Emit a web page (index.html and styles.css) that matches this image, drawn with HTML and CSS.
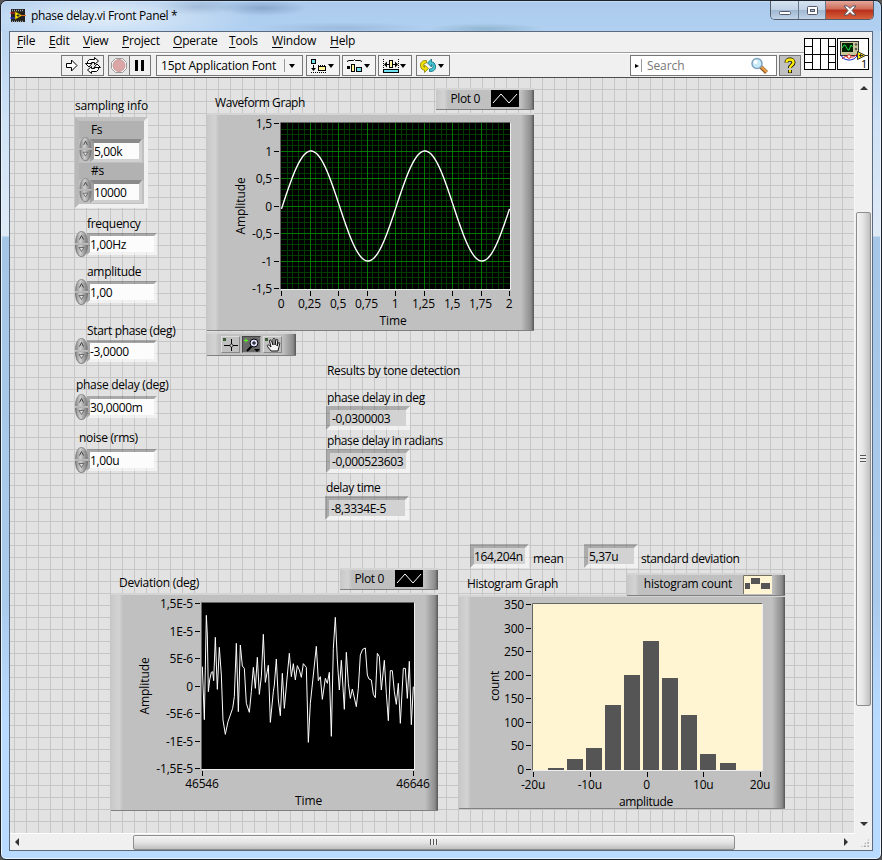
FILE: index.html
```html
<!DOCTYPE html>
<html lang="en">
<head>
<meta charset="utf-8">
<title>phase delay.vi Front Panel *</title>
<link rel="stylesheet" href="styles.css">
</head>
<body>
<div class="window">
  <header class="titlebar">
    <svg class="app-icon" width="16" height="16" viewBox="0 0 16 16"><rect x="1" y="1" width="14" height="13" fill="#222"/><path d="M2 2.500h12M2 13.500h12" stroke="#aaa" stroke-width="1.500" stroke-dasharray="1 1"/><path d="M5 3.500v8l7-4z" fill="#ffe600" stroke="#6b5c00" stroke-width=".6"/><path d="M0 5h5" stroke="#e02020"/><path d="M0 10h5" stroke="#2040ff"/><path d="M11 7.500h5" stroke="#e07020"/><path d="M6.500 7.500h3M8 6v3" stroke="#333"/></svg>
    <span class="title">phase delay.vi Front Panel *</span>
    <div class="win-buttons">
      <span class="wb wb-min"><svg width="28" height="18"><rect x="8.500" y="10.500" width="11" height="3" rx="1" fill="#fff" stroke="#535666"/></svg></span>
      <span class="wb wb-max"><svg width="26" height="18"><rect x="8.500" y="5.500" width="10" height="8" rx="1" fill="#fff" stroke="#535666"/><rect x="11.500" y="8.500" width="4" height="2" fill="#a8bdd6" stroke="#535666"/></svg></span>
      <span class="wb wb-close"><svg width="46" height="18"><path d="M18 5h3.500l2.500 2.500L26.500 5H30l-4 4.500 4 4.500h-3.500L24 11.500 21.500 14H18l4-4.500z" fill="#fff" stroke="#535666"/></svg></span>
    </div>
  </header>
  <div class="client">
    <div class="bars">
      <div class="bars-main">
        <nav class="menu">
          <span class="m1"><u>F</u>ile</span><span class="m2"><u>E</u>dit</span><span class="m3"><u>V</u>iew</span><span class="m4"><u>P</u>roject</span><span class="m5"><u>O</u>perate</span><span class="m6"><u>T</u>ools</span><span class="m7"><u>W</u>indow</span><span class="m8"><u>H</u>elp</span>
        </nav>
        <div class="toolbar">
          <div class="group">
            <span class="tb"><svg width="20" height="19"><path d="M4.500 7.500h5v-3.500l5.500 5.500-5.500 5.500v-3.500h-5z" fill="#fff" stroke="#000"/></svg></span>
            <span class="tb"><svg width="20" height="19" fill="#fff" stroke="#000"><path d="M4.500 8V5.500l2-2h5V1.500l4 3.500-4 3.500V6.500H8.500L7.500 8z"/><path d="M15.500 11v2.500l-2 2h-5v2l-4-3.500 4-3.500v2h3l1-1.500z"/><path d="M2.500 7.500h6.500l-3 3.500zM17.500 11.500H11l3-3.500z"/></svg></span>
          </div>
          <div class="group group-run">
            <span class="tb tb-off"><svg width="20" height="19"><path d="M6.500 2.500h7l4 4v6l-4 4h-7l-4-4v-6z" fill="#fff" stroke="#999"/><circle cx="10" cy="9.500" r="6" fill="#dca6a6" stroke="#c49a9a"/></svg></span>
            <span class="tb"><svg width="20" height="19"><path d="M5 4h3v11H5zM11 4h3v11h-3z"/></svg></span>
          </div>
          <div class="font-box"><span>15pt Application Font</span><i class="sep"></i><b class="caret"></b></div>
          <span class="drop"><svg width="17" height="18"><rect x="1.500" y="2.500" width="4" height="4" fill="#6fe0f0" stroke="#000"/><path d="M3.500 8v4" stroke="#000"/><path d="M1 11h5l-2.500 3z"/><path d="M1 15.500h16M8 8.500h8" stroke="#000" stroke-dasharray="1 1"/><rect x="8.500" y="9.500" width="7" height="4" fill="#fff79a" stroke="#000"/></svg><b class="caret"></b></span>
          <span class="drop drop2"><svg width="17" height="18"><path d="M1 4.500l2-1h4.500l1-1 1 1h4.500l2 1" fill="none" stroke="#000"/><rect x="1" y="9" width="3" height="3"/><rect x="5.500" y="7.500" width="3" height="7" fill="#fff79a" stroke="#000"/><rect x="10.500" y="10.500" width="5" height="4" fill="#6fe0f0" stroke="#000"/></svg><b class="caret"></b></span>
          <span class="drop drop3"><svg width="17" height="18"><path d="M1.500 2v9M16.500 2v9" stroke="#000" stroke-dasharray="1 1"/><path d="M2 7.500l3-3v6zM16 7.500l-3-3v6z"/><path d="M3 7.500h12" stroke="#000"/><rect x="7.500" y="3.500" width="3" height="7" fill="#fff79a" stroke="#000"/><rect x="1.500" y="12.500" width="15" height="3" fill="#6fe0f0" stroke="#000"/></svg><b class="caret"></b></span>
          <span class="drop drop4"><svg width="18" height="18"><path d="M7.500 3.500C3 3 1 6 1.500 9c.5 3 2 4 4 4v2.500l4-4-4-3.500v2.500C3.500 10 4 6 7.500 6z" fill="#f0e000" stroke="#8a8000" stroke-width=".8"/><path d="M10.500 14.500c4.500.5 6.500-2.500 6-5.500-.5-3-2-4-4-4V2L8.500 6l4 4V7.500c2.500.5 2 4.500-2 4.500z" fill="#42c4d4" stroke="#126a78" stroke-width=".8"/></svg><b class="caret"></b></span>
          <div class="search"><b class="right-caret"></b><i class="sep"></i><span>Search</span>
            <svg width="20" height="18"><path d="M10.500 9.500l6 6" stroke="#8b5a2a" stroke-width="4"/><path d="M11 9.500l5.500 5.500" stroke="#f0a040" stroke-width="2.200"/><circle cx="7" cy="6.500" r="5" fill="#c9ecfb" stroke="#7fa2bd" stroke-width="1.500"/><circle cx="5.500" cy="5" r="2" fill="#fff"/></svg></div>
          <span class="help"><svg width="20" height="20" fill="none"><path d="M6.500 6.500c0-4 7-4 7 0 0 2.500-3.500 2.500-3.500 5.500M10 14v3" stroke="#000" stroke-width="4"/><path d="M6.500 6.500c0-4 7-4 7 0 0 2.500-3.500 2.500-3.500 5.500M10 14v2.500" stroke="#ffec00" stroke-width="2.400"/></svg></span>
        </div>
      </div>
      <div class="vi-icons">
        <svg width="32" height="32" viewBox="0 0 32 32"><rect x=".5" y=".5" width="31" height="31" fill="#fff" stroke="#000"/><path d="M8.500 0v32M16.500 0v32M24.500 0v32M0 8.500h8M24 8.500h8M0 16.500h32M0 24.500h8M24 24.500h8" stroke="#000"/></svg>
        <svg width="32" height="32" viewBox="0 0 32 32"><rect x=".5" y=".5" width="31" height="31" fill="#fff" stroke="#000"/><rect x="3.500" y="3.500" width="18" height="14" fill="#c9c69a" stroke="#333"/><rect x="5" y="5" width="11" height="9" fill="#002000"/><path d="M5 10l2-3h1l3 5h1l2-5 1.500 2" stroke="#20e040" fill="none"/><circle cx="19" cy="6.500" r="1.200" fill="#555"/><circle cx="19" cy="11" r="1.200" fill="#555"/><path d="M4 17c2 6 12 7 16 1" stroke="#1020c0" fill="none"/><path d="M5 21c4-6 10 2 15-5h2" stroke="#e02020" fill="none"/><circle cx="12" cy="18.500" r="1.800" fill="#fff" stroke="#e02020"/><path d="M20.500 13.500v8l8-4z" fill="#ffe600" stroke="#333"/><path d="M22 17.500h4M23.500 16v3M28 17.500h4" stroke="#333"/><text x="24" y="30" class="tiny">1</text></svg>
      </div>
    </div>
    <div class="work">
      <main class="canvas"><div class="layer">
        <span class="lb l-sampling">sampling info</span>
        <div class="cluster"></div>
        <span class="lb l-fs">Fs</span>
        <div class="num n-fs"><svg class="spin"><use href="#spin"/></svg><div class="field">5,00k</div></div>
        <span class="lb l-ns">#s</span>
        <div class="num n-ns"><svg class="spin"><use href="#spin"/></svg><div class="field">10000</div></div>

        <span class="lb l-freq">frequency</span>
        <div class="num n-freq"><svg class="spin"><use href="#spin"/></svg><div class="field">1,00Hz</div></div>
        <span class="lb l-ampl">amplitude</span>
        <div class="num n-ampl"><svg class="spin"><use href="#spin"/></svg><div class="field">1,00</div></div>
        <span class="lb l-start">Start phase (deg)</span>
        <div class="num n-start"><svg class="spin"><use href="#spin"/></svg><div class="field">-3,0000</div></div>
        <span class="lb l-delay">phase delay (deg)</span>
        <div class="num n-delay"><svg class="spin"><use href="#spin"/></svg><div class="field">30,0000m</div></div>
        <span class="lb l-noise">noise (rms)</span>
        <div class="num n-noise"><svg class="spin"><use href="#spin"/></svg><div class="field">1,00u</div></div>

        <span class="lb l-results">Results by tone detection</span>
        <span class="lb l-rdeg">phase delay in deg</span>
        <div class="ind i-deg">-0,0300003</div>
        <span class="lb l-rrad">phase delay in radians</span>
        <div class="ind i-rad">-0,000523603</div>
        <span class="lb l-rtime">delay time</span>
        <div class="ind i-time">-8,3334E-5</div>
        <div class="ind i-mean">164,204n</div>
        <span class="lb l-mean">mean</span>
        <div class="ind i-std">5,37u</div>
        <span class="lb l-std">standard deviation</span>

        <span class="lb l-wave">Waveform Graph</span>
        <div class="legend lg-wave"><span>Plot 0</span><svg width="28" height="17"><rect width="28" height="17"/><path d="M2 13l8-9 8 9 8-9" fill="none" stroke="#fff"/></svg></div>
        <div class="graph g-wave"><svg id="wave" width="326" height="218" viewBox="207 113 326 218"></svg></div>
        <div class="palette">
          <span class="pt"><svg width="17" height="15"><rect x="1" y="1" width="3" height="3" fill="#3d5c33"/><path d="M2 8.500h14M9.500 2v12" stroke="#000"/><circle cx="9.500" cy="8.500" r="1.500" fill="#ddd" stroke="#000" stroke-width=".7"/></svg></span>
          <span class="pt on"><svg width="17" height="15"><path d="M1 3.500h4M3 1.500v4" stroke="#5cff20"/><path d="M9 9l-5 5" stroke="#000" stroke-width="2"/><circle cx="11" cy="6" r="4" fill="#dfe0ff" stroke="#000"/><path d="M9 6h4M11 4v4" stroke="#000"/><path d="M11 12h6l-3 3z"/></svg></span>
          <span class="pt"><svg width="17" height="15"><rect x="1" y="1" width="3" height="3" fill="#3d5c33"/><path d="M7 14L3.500 9.500c-.8-1.500.8-2 1.800-1L7 10 5.500 4c0-1.500 1.500-1.500 2 0L9 8V2.500c0-1.500 2-1.500 2 0V8l1-5c.5-1.300 2-.8 1.800.5L13 9l1.200-3c.8-1 1.800-.4 1.500.8L14 14z" fill="#f3f3f3" stroke="#000" stroke-width=".9"/></svg></span>
        </div>

        <span class="lb l-dev">Deviation (deg)</span>
        <div class="legend lg-dev"><span>Plot 0</span><svg width="28" height="17"><rect width="28" height="17"/><path d="M2 13l8-9 8 9 8-9" fill="none" stroke="#fff"/></svg></div>
        <div class="graph g-dev"><svg id="dev" width="326" height="217" viewBox="111 593 326 217"></svg></div>

        <span class="lb l-hist">Histogram Graph</span>
        <div class="graph g-hist"><svg id="hist" width="326" height="214" viewBox="458 595 326 214"></svg></div>
        <div class="legend lg-hist"><span>histogram count</span><svg width="29" height="19"><rect width="29" height="19" fill="#fff5d2"/><path d="M.5 19V.5H29" stroke="#777060" fill="none"/><path d="M2 8h5v6H2zM8 3h9v6H8zM18 8h9v6h-9z" fill="#555"/></svg></div>
      </div></main>
      <div class="vscroll"><b class="up"></b><div class="vthumb"></div><b class="down"></b></div>
      <div class="hscroll"><b class="left"></b><div class="hthumb"></div><b class="right"></b></div>
      <div class="grip"></div>
    </div>
  </div>
</div>
<svg width="0" height="0" class="defs">
  <defs>
    <linearGradient id="metal"><stop offset="0" stop-color="#858585"/><stop offset=".4" stop-color="#cfcfcf"/><stop offset="1" stop-color="#757575"/></linearGradient>
    <symbol id="spin" viewBox="0 0 13 26"><path d="M.5 12.500C.5 5 3 .5 6.500.5s6 4.500 6 12z" fill="url(#metal)" stroke="#8a8a8a"/><path d="M.5 13.500c0 7.500 2.500 12 6 12s6-4.500 6-12z" fill="url(#metal)" stroke="#777"/><path d="M0 13h13" stroke="#eee"/><path d="M4.500 8.500l2-4 2 4" fill="none" stroke="#444"/><path d="M4 16.500h5l-2.500 4z" fill="#ddd" stroke="#555" stroke-width=".8"/></symbol>
  </defs>
</svg>
<script src="graphs.js"></script>
</body>
</html>
```
FILE: styles.css
```css
* { box-sizing: border-box; }
body { margin: 0; width: 882px; height: 860px; overflow: hidden; background: #555; font: 12px/16px "Open Sans", "Noto Sans", sans-serif; color: #000; letter-spacing: -0.2px; }
svg { display: block; flex: none; }
svg text { font: 12px "Open Sans", "Noto Sans", sans-serif; letter-spacing: -0.2px; }
svg .tiny { font-size: 11px; }
.defs { position: absolute; }
.window { width: 882px; height: 860px; border: 1px solid #1c222b; border-radius: 7px 7px 6px 6px; background: linear-gradient(#b5d0ec 0, #b9d4f0 30px, #cfe2f6 120px, #dfeaf6 235px, #a5c6e6 236px, #aacbec 600px, #b9dbff 720px); box-shadow: inset 0 0 0 1px #e8f3fd; padding: 0 8px; overflow: hidden; }
.titlebar { height: 30px; margin: 0 -8px; padding-left: 9px; display: flex; background: radial-gradient(ellipse 150px 30px at 100px 16px, rgba(240,246,252,.8), transparent), radial-gradient(ellipse 40px 8px at 195px 6px, rgba(70,100,140,.3), transparent), radial-gradient(ellipse 45px 8px at 262px 7px, rgba(70,100,140,.35), transparent), radial-gradient(ellipse 90px 6px at 340px 27px, rgba(90,120,160,.25), transparent), radial-gradient(ellipse 60px 6px at 485px 28px, rgba(70,120,130,.3), transparent), linear-gradient(rgba(160,195,235,.5), rgba(175,208,242,.8)); }
.app-icon { margin-top: 7px; }
.title { margin: 7px 0 0 5px; letter-spacing: -.34px; }
.win-buttons { margin: 0 7px 0 auto; height: 19px; display: flex; border: 1px solid #525d6c; border-top: 0; border-radius: 0 0 5px 5px; overflow: hidden; }
.wb { background: linear-gradient(#d6e3f1, #c2d3e6 48%, #9fb7d1 50%, #c0d3e8); border-right: 1px solid #6c7887; }
.wb-min { width: 28px; }
.wb-max { width: 27px; }
.wb-close { width: 47px; border: 0; background: linear-gradient(#e3a89c, #cf6b58 45%, #b8301a 50%, #d8603c); }
.client { width: 864px; height: 820px; border: 1px solid #5b6b7d; background: #f0f0f0; display: flex; flex-direction: column; }
.bars { height: 46px; display: flex; border-bottom: 1px solid #4c4c4c; }
.bars-main { width: 794px; }
.menu { height: 21px; border-bottom: 1px solid #a0a0a0; display: flex; padding: 1px 0 0 7px; white-space: nowrap; }
.menu u { text-underline-offset: 2px; }
.m1 { width: 32px; } .m2 { width: 34px; } .m3 { width: 39px; } .m4 { width: 51px; } .m5 { width: 56px; } .m6 { width: 43px; } .m7 { width: 58px; }
.toolbar { height: 25px; display: flex; align-items: flex-start; padding: 1px 0 0 51px; border-top: 1px solid #fff; }
.group { display: flex; border: 1px solid #777; height: 21px; width: 43px; }
.group .tb + .tb { border-left: 1px solid #777; }
.group-run { margin-left: 4px; width: 43px; }
.tb-off { background: #e6e6e6; }
.font-box { margin-left: 5px; width: 147px; height: 21px; border: 1px solid #777; background: #f4f4f4; display: flex; align-items: center; padding-left: 4px; white-space: nowrap; }
.font-box .sep { margin-left: auto; }
.font-box .caret { margin: 0 7px 0 4px; }
.sep { width: 1px; height: 13px; background: #999; }
.caret { border: 3px solid transparent; border-top: 4px solid #000; border-bottom: 0; }
.drop { width: 34px; height: 21px; margin-left: 3px; border: 1px solid #777; background: #f4f4f4; display: flex; align-items: center; padding-left: 3px; }
.drop .caret { margin-left: 1px; }
.drop2, .drop3 { margin-left: 2px; }
.drop4 { margin-left: 4px; padding-left: 2px; }
.search { margin-left: auto; width: 147px; height: 21px; border: 1px solid #777; background: #fff; display: flex; align-items: center; padding-left: 4px; color: #777; }
.search span { margin-left: 5px; letter-spacing: -.1px; }
.search svg { margin: 0 6px 0 auto; }
.right-caret { border: 2px solid transparent; border-left: 4px solid #000; border-right: 0; margin-right: 2px; }
.help { width: 22px; height: 21px; margin: 0 3px 0 2px; border: 1px solid #777; background: #c0c0c0; }
.help svg { height: 19px; }
.vi-icons { display: flex; gap: 1px; padding-top: 6px; }
.work { flex: 1; display: grid; grid-template: 755px 17px / 845px 17px; }
.canvas { position: relative; overflow: hidden; background: repeating-linear-gradient(90deg, transparent 0 4px, #c6c6c6 4px 5px, transparent 5px 12px), repeating-linear-gradient(transparent 0 11px, #c6c6c6 11px 12px), #e2e2e2; border-right: 1px solid #f6f6f6; }
.vscroll, .hscroll { background: #f0f0f0; display: flex; align-items: center; }
.vscroll { flex-direction: column; padding: 8px 0 7px; }
.hscroll { padding: 0 7px 0 5px; border-top: 1px solid #fff; }
.vthumb { width: 15px; height: 494px; margin: 122px 1px auto 0; border: 1px solid #8e8e8e; border-radius: 2px; background: repeating-linear-gradient(#555 0 1px, #eee 1px 3px) center / 6px 8px no-repeat, linear-gradient(90deg, #f4f4f4, #e3e3e3 50%, #bfbfc1); }
.hthumb { height: 15px; width: 602px; margin: 0 auto 0 114px; border: 1px solid #8e8e8e; border-radius: 2px; background: repeating-linear-gradient(90deg, #555 0 1px, #eee 1px 3px) center / 8px 6px no-repeat, linear-gradient(#f4f4f4, #e3e3e3 50%, #bfbfc1); }
.up, .down, .left, .right { border: 4px solid transparent; }
.up { border-top: 0; border-bottom-color: #333; }
.down { border-bottom: 0; border-top-color: #333; }
.left { border-left: 0; border-right-color: #333; }
.right { border-right: 0; border-left-color: #333; }
.grip { margin: 5px 0 0 5px; width: 10px; height: 10px; background: radial-gradient(circle, #aaa 1px, transparent 1.2px) 0 0 / 3.3px 3.3px; clip-path: polygon(100% 0, 100% 100%, 0 100%); }

/* front panel objects: coordinates are window coordinates */
.layer { position: absolute; left: -10px; top: -78px; width: 882px; height: 860px; letter-spacing: -.36px; }
.layer > * { position: absolute; white-space: nowrap; }
.lb { margin-top: 1px; }
.cluster { left: 75px; top: 117px; width: 73px; height: 91px; border: 4px solid; border-color: #c2c2c2 #f0f0f0 #f0f0f0 #b8b8b8; background: linear-gradient(#b2b2b2 18px, #c0c0c0 18px 42px, #b2b2b2 42px 59px, #c0c0c0 59px); }
.num { display: flex; width: 82px; height: 26px; }
.spin { width: 13px; height: 26px; position: relative; z-index: 1; }
.field { margin: 2px 0 0 -1px; width: 70px; height: 22px; border: 3px solid; border-color: rgba(0,0,0,.25) rgba(255,255,255,.55) rgba(255,255,255,.55) rgba(0,0,0,.25); background: #fcfcfc padding-box; line-height: 18px; }
.n-fs .field, .n-ns .field { width: 52px; height: 23px; margin-left: -2px; border-width: 4px 3px 3px 4px; border-color: #8a8a8a #d0d0d0 #d0d0d0 #a0a0a0; }
.n-fs { left: 79px; top: 137px; } .n-ns { left: 79px; top: 178px; }
.n-fs .spin, .n-ns .spin { height: 24px; }
.n-freq { left: 75px; top: 231px; } .n-ampl { left: 75px; top: 279px; } .n-start { left: 75px; top: 338px; } .n-delay { left: 75px; top: 394px; } .n-noise { left: 75px; top: 447px; }
.ind { height: 24px; border: 4px solid; border-color: rgba(0,0,0,.24) rgba(255,255,255,.55) rgba(255,255,255,.55) rgba(0,0,0,.24); background: #d2d2d2 padding-box; padding-left: 2px; width: 84px; line-height: 18px; }
.i-deg { left: 326px; top: 406px; } .i-rad { left: 326px; top: 449px; } .i-time { left: 325px; top: 496px; }
.i-mean { left: 470px; top: 544px; width: 59px; padding: 0; } .i-std { left: 584px; top: 544px; width: 54px; padding: 0 0 0 1px; }
.l-sampling { left: 75px; top: 97px; letter-spacing: -.2px; } .l-fs { left: 91px; top: 121px; } .l-ns { left: 91px; top: 162px; }
.l-freq { left: 87px; top: 215px; letter-spacing: -.3px; } .l-ampl { left: 87px; top: 263px; letter-spacing: -.3px; } .l-start { left: 87px; top: 322px; } .l-delay { left: 76px; top: 376px; letter-spacing: -.3px; } .l-noise { left: 79px; top: 429px; letter-spacing: -.3px; }
.l-results { left: 327px; top: 362px; letter-spacing: -.33px; } .l-rdeg { left: 327px; top: 389px; letter-spacing: -.34px; } .l-rrad { left: 327px; top: 432px; letter-spacing: -.42px; } .l-rtime { left: 326px; top: 479px; }
.l-mean { left: 533px; top: 550px; } .l-std { left: 641px; top: 550px; }
.l-wave { left: 215px; top: 94px; letter-spacing: -.42px; } .l-dev { left: 119px; top: 574px; letter-spacing: -.25px; } .l-hist { left: 467px; top: 575px; }
.graph, .legend, .palette { border-top: 2px solid #d4d4d4; border-bottom: 1px solid #808080; background: linear-gradient(90deg, #c8c8c8, #d3d3d3 8px, #c0c0c0 12px, #c0c0c0 calc(100% - 13px), #8c8c8c calc(100% - 3px), #555 100%); }
.graph svg { margin-top: -2px; }
.g-wave { left: 207px; top: 113px; width: 327px; height: 218px; }
.g-dev { left: 111px; top: 593px; width: 327px; height: 218px; }
.g-hist { left: 459px; top: 595px; width: 326px; height: 214px; }
.legend { display: flex; align-items: center; justify-content: flex-end; height: 22px; padding: 0 15px 2px 0; gap: 11px; }
.lg-wave { left: 436px; top: 88px; width: 98px; } .lg-dev { left: 340px; top: 568px; width: 98px; } .lg-hist { left: 627px; top: 573px; width: 158px; height: 23px; padding-right: 13px; letter-spacing: -.25px; }
.palette { left: 207px; top: 332px; width: 89px; height: 24px; display: flex; gap: 2px; padding: 2px 0 0 14px; }
.pt { width: 19px; height: 17px; border: 1px solid; border-color: #ddd #888 #888 #ddd; }
.pt.on { background: #6a6a6a; border-color: #444 #aaa #aaa #444; }
```
FILE: graphs.js
```js
const NS = 'http://www.w3.org/2000/svg';

function add(svg, tag, attrs, content) {
  const el = document.createElementNS(NS, tag);
  for (const key in attrs) el.setAttribute(key, attrs[key]);
  if (content) el.textContent = content;
  svg.appendChild(el);
}

function line(svg, x1, y1, x2, y2, stroke) {
  add(svg, 'path', { d: `M${x1} ${y1}L${x2} ${y2}`, stroke, 'shape-rendering': 'crispEdges' });
}

// Axis labels, ticks and the plot rectangle shared by all graphs.
function axes(svg, g) {
  add(svg, 'rect', { x: g.x, y: g.y, width: g.w, height: g.h, fill: g.fill });
  add(svg, 'path', { d: `M${g.x - .5} ${g.y + g.h}V${g.y - .5}H${g.x + g.w}`, stroke: '#666', fill: 'none' });
  add(svg, 'path', { d: `M${g.x} ${g.y + g.h + .5}H${g.x + g.w + .5}V${g.y}`, stroke: '#eee', fill: 'none' });
  g.ys.forEach((t, i) => {
    const y = g.y0 + i * g.dy;
    line(svg, g.x - 7, y, g.x - 2, y, '#000');
    add(svg, 'text', { x: g.x - 9, y: y + 4.5, 'text-anchor': 'end' }, t);
  });
  g.xs.forEach((t, i) => {
    const x = g.x0 + i * g.dx;
    line(svg, x, g.y + g.h + 2, x, g.y + g.h + 7, '#000');
    add(svg, 'text', { x: x - .5, y: g.y + g.h + 19, 'text-anchor': 'middle' }, t);
  });
  add(svg, 'text', { x: g.xt[0], y: g.xt[1], 'text-anchor': 'middle', textLength: g.xt[3] }, g.xt[2]);
  add(svg, 'text', { transform: `translate(${g.yt[0]} ${g.yt[1]}) rotate(-90)`, 'text-anchor': 'middle', textLength: g.yt[3] }, g.yt[2]);
}

const wave = document.getElementById('wave');
axes(wave, {
  x: 281, y: 123, w: 229, h: 166, fill: '#000', y0: 123.5, dy: 27.5, x0: 281.5, dx: 28.5,
  ys: ['1,5', '1', '0,5', '0', '-0,5', '-1', '-1,5'],
  xs: ['0', '0,25', '0,5', '0,75', '1', '1,25', '1,5', '1,75', '2'],
  xt: [393, 325, 'Time', 27], yt: [245, 206, 'Amplitude', 57]
});
for (let i = 1; i < 40; i++) if (i % 5) line(wave, 281.5 + i * 5.7, 123, 281.5 + i * 5.7, 289, '#003c00');
for (let i = 1; i < 30; i++) if (i % 5) line(wave, 281, 123.5 + i * 5.5, 510, 123.5 + i * 5.5, '#003c00');
for (let i = 1; i < 8; i++) line(wave, 281.5 + i * 28.5, 123, 281.5 + i * 28.5, 289, '#007800');
for (let i = 1; i < 6; i++) line(wave, 281, 123.5 + i * 27.5, 510, 123.5 + i * 27.5, '#007800');
const sine = [];
for (let x = 0; x <= 228; x++) sine.push(`${281.5 + x},${206 - 55 * Math.sin(2 * Math.PI * x / 114 - Math.PI / 60)}`);
add(wave, 'polyline', { points: sine.join(' '), fill: 'none', stroke: '#fff', 'stroke-width': 1.4 });

const dev = document.getElementById('dev');
axes(dev, {
  x: 202, y: 603, w: 212, h: 166, fill: '#000', y0: 603.5, dy: 27.5, x0: 202.5, dx: 211,
  ys: ['1,5E-5', '1E-5', '5E-6', '0', '-5E-6', '-1E-5', '-1,5E-5'],
  xs: ['46546', '46646'],
  xt: [308.5, 805, 'Time', 27], yt: [149, 686, 'Amplitude', 57]
});
add(dev, 'polyline', {
  transform: 'translate(100 560) scale(.33333)', fill: 'none', stroke: '#fff', 'stroke-width': 3,
  points: '307,320 313,479 319,166 322,225 325,395 329,360 334,337 338,335 341,362 346,232 352,388 358,262 364,345 369,480 376,523 384,485 398,445 403,410 409,250 415,455 421,255 427,318 433,325 439,430 448,457 454,395 460,322 466,385 472,292 478,403 484,350 490,223 496,367 505,316 511,487 520,395 523,375 529,297 535,420 541,467 547,340 553,445 562,345 568,280 574,350 580,311 586,360 592,317 598,330 604,352 610,311 619,322 625,547 631,430 640,345 649,259 655,362 661,350 667,418 676,355 682,370 688,337 694,529 700,265 706,172 712,300 718,390 724,301 733,448 739,277 745,370 751,415 757,387 769,440 775,385 781,285 788,268 796,264 802,345 807,357 814,360 820,403 826,413 832,280 838,290 844,390 853,301 859,400 865,482 871,332 877,332 883,395 889,433 895,370 901,490 910,325 916,325 922,415 928,304 934,494 940,380'
});

const hist = document.getElementById('hist');
axes(hist, {
  x: 532, y: 604, w: 229, h: 166, fill: '#fff5d2', y0: 604.5, dy: 23.57, x0: 532.5, dx: 56.75,
  ys: ['350', '300', '250', '200', '150', '100', '50', '0'],
  xs: ['-20u', '-10u', '0', '10u', '20u'],
  xt: [645, 806, 'amplitude', 54], yt: [498, 686, 'count', 30]
});
[[547, 768], [566, 759], [585, 748], [604, 705], [623, 675], [642, 641], [661, 678], [680, 715], [699, 754], [719, 763]]
  .forEach(([x, y]) => add(hist, 'rect', { x, y, width: 16, height: 770 - y, fill: '#555' }));
```
